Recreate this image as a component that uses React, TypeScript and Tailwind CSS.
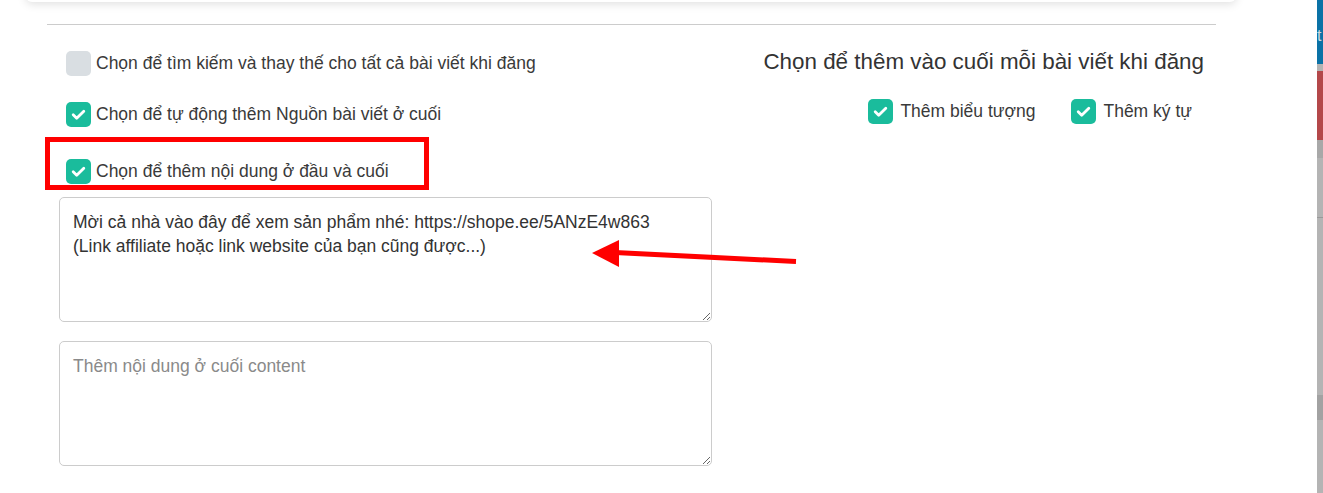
import React from "react";

const FONT = { fontFamily: '"Liberation Sans", Arial, sans-serif' };

function Check({ checked }: { checked: boolean }) {
  if (!checked) return <span className="block h-[25px] w-[25px] shrink-0 rounded-[5px] bg-[#d9dee2]" />;
  return (
    <span className="flex h-[25px] w-[25px] shrink-0 items-center justify-center rounded-[5px] bg-[#1abc9c]">
      <svg width="25" height="25" viewBox="0 0 25 25" fill="none">
        <path d="M7.2 12.8 L10.7 16.3 L17.8 9.2" stroke="#fff" strokeWidth="2.8" strokeLinecap="round" strokeLinejoin="round" />
      </svg>
    </span>
  );
}

function Option({ label, checked }: { label: string; checked: boolean }) {
  return (
    <label className="flex h-[25px] items-center gap-[5px] text-[17.5px] text-[#3a3a3a]">
      <Check checked={checked} />
      <span>{label}</span>
    </label>
  );
}

function SideStrip() {
  // narrow edge of the neighbouring panel
  return (
    <div className="flex h-full w-[6px] shrink-0 flex-col overflow-hidden">
      <div className="h-[64px] bg-[#0b72a6] pt-[28px] text-[16px] leading-none text-[#cfd8dc]">t</div>
      <div className="h-[7px] bg-[#b3b3b3]" />
      <div className="h-[69px] bg-[#b4484a]" />
      <div className="h-[18px] bg-[#a8a8a8]" />
      <div className="h-[59px] bg-[#b4b4b4]" />
      <div className="h-px bg-[#999]" />
      <div className="h-[177px] bg-[#b4b4b4]" />
      <div className="h-[25px] bg-[#a2a2a2]" />
      <div className="flex-1 bg-[#b4b4b4]" />
    </div>
  );
}

export default function App() {
  return (
    <div className="relative flex h-[493px] w-[1323px] overflow-hidden bg-white" style={FONT}>
      <div className="flex-1">
        {/* bottom edge of the card above */}
        <div className="-mt-[18px] ml-[26px] h-[20px] w-[1210px] rounded-b-md bg-white shadow-[0_2px_10px_rgba(0,0,0,0.13)]" />

        <div className="ml-[47px] mt-[22px] h-px w-[1169px] bg-[#cccccc]" />

        <div className="ml-[47px] flex w-[1169px]">
          <div className="w-[700px] pl-[12px]">
            <div className="mt-[26px] pl-[7px]">
              <Option label="Chọn để tìm kiếm và thay thế cho tất cả bài viết khi đăng" checked={false} />
            </div>
            <div className="mt-[26px] pl-[7px]">
              <Option label="Chọn để tự động thêm Nguồn bài viết ở cuối" checked />
            </div>
            <div className="relative mt-[32px] pl-[7px]">
              <Option label="Chọn để thêm nội dung ở đầu và cuối" checked />
              <span className="pointer-events-none absolute left-[-14px] top-[-22px] h-[53px] w-[384px] border-[5px] border-[#ff0000]" />
            </div>
            <textarea
              className="mt-[13px] block h-[125px] w-[653px] rounded-[5px] border border-[#cccccc] px-[13px] pt-[12px] pb-[10px] text-[17.5px] leading-[24px] text-[#333] outline-none"
              style={FONT}
              defaultValue={"Mời cả nhà vào đây để xem sản phẩm nhé: https://shope.ee/5ANzE4w863\n(Link affiliate hoặc link website của bạn cũng được...)"}
            />
            <textarea
              className="mt-[19px] block h-[125px] w-[653px] rounded-[5px] border border-[#cccccc] px-[13px] pt-[12px] pb-[10px] text-[17.5px] leading-[24px] text-[#333] outline-none placeholder:text-[#8a8a8a]"
              style={FONT}
              placeholder="Thêm nội dung ở cuối content"
            />
          </div>

          <div className="flex flex-1 flex-col items-end pr-[12px]">
            <h3 className="mt-[23px] text-[22.4px] leading-[28px] font-normal text-[#333]">
              Chọn để thêm vào cuối mỗi bài viết khi đăng
            </h3>
            <div className="mr-[12px] mt-[23px] flex gap-[36px]">
              <label className="flex h-[25px] items-center gap-[7px] text-[17.5px] text-[#3a3a3a]">
                <Check checked />
                <span>Thêm biểu tượng</span>
              </label>
              <label className="flex h-[25px] items-center gap-[7px] text-[17.5px] text-[#3a3a3a]">
                <Check checked />
                <span>Thêm ký tự</span>
              </label>
            </div>
          </div>
        </div>
      </div>

      <SideStrip />

      {/* pointer arrow */}
      <svg className="pointer-events-none absolute left-[585px] top-[235px]" width="220" height="40" viewBox="0 0 220 40">
        <path d="M30 17.5 L211 26.5" stroke="#ff0000" strokeWidth="5" />
        <path d="M7 18 L34 5 L34 32 Z" fill="#ff0000" />
      </svg>
    </div>
  );
}
